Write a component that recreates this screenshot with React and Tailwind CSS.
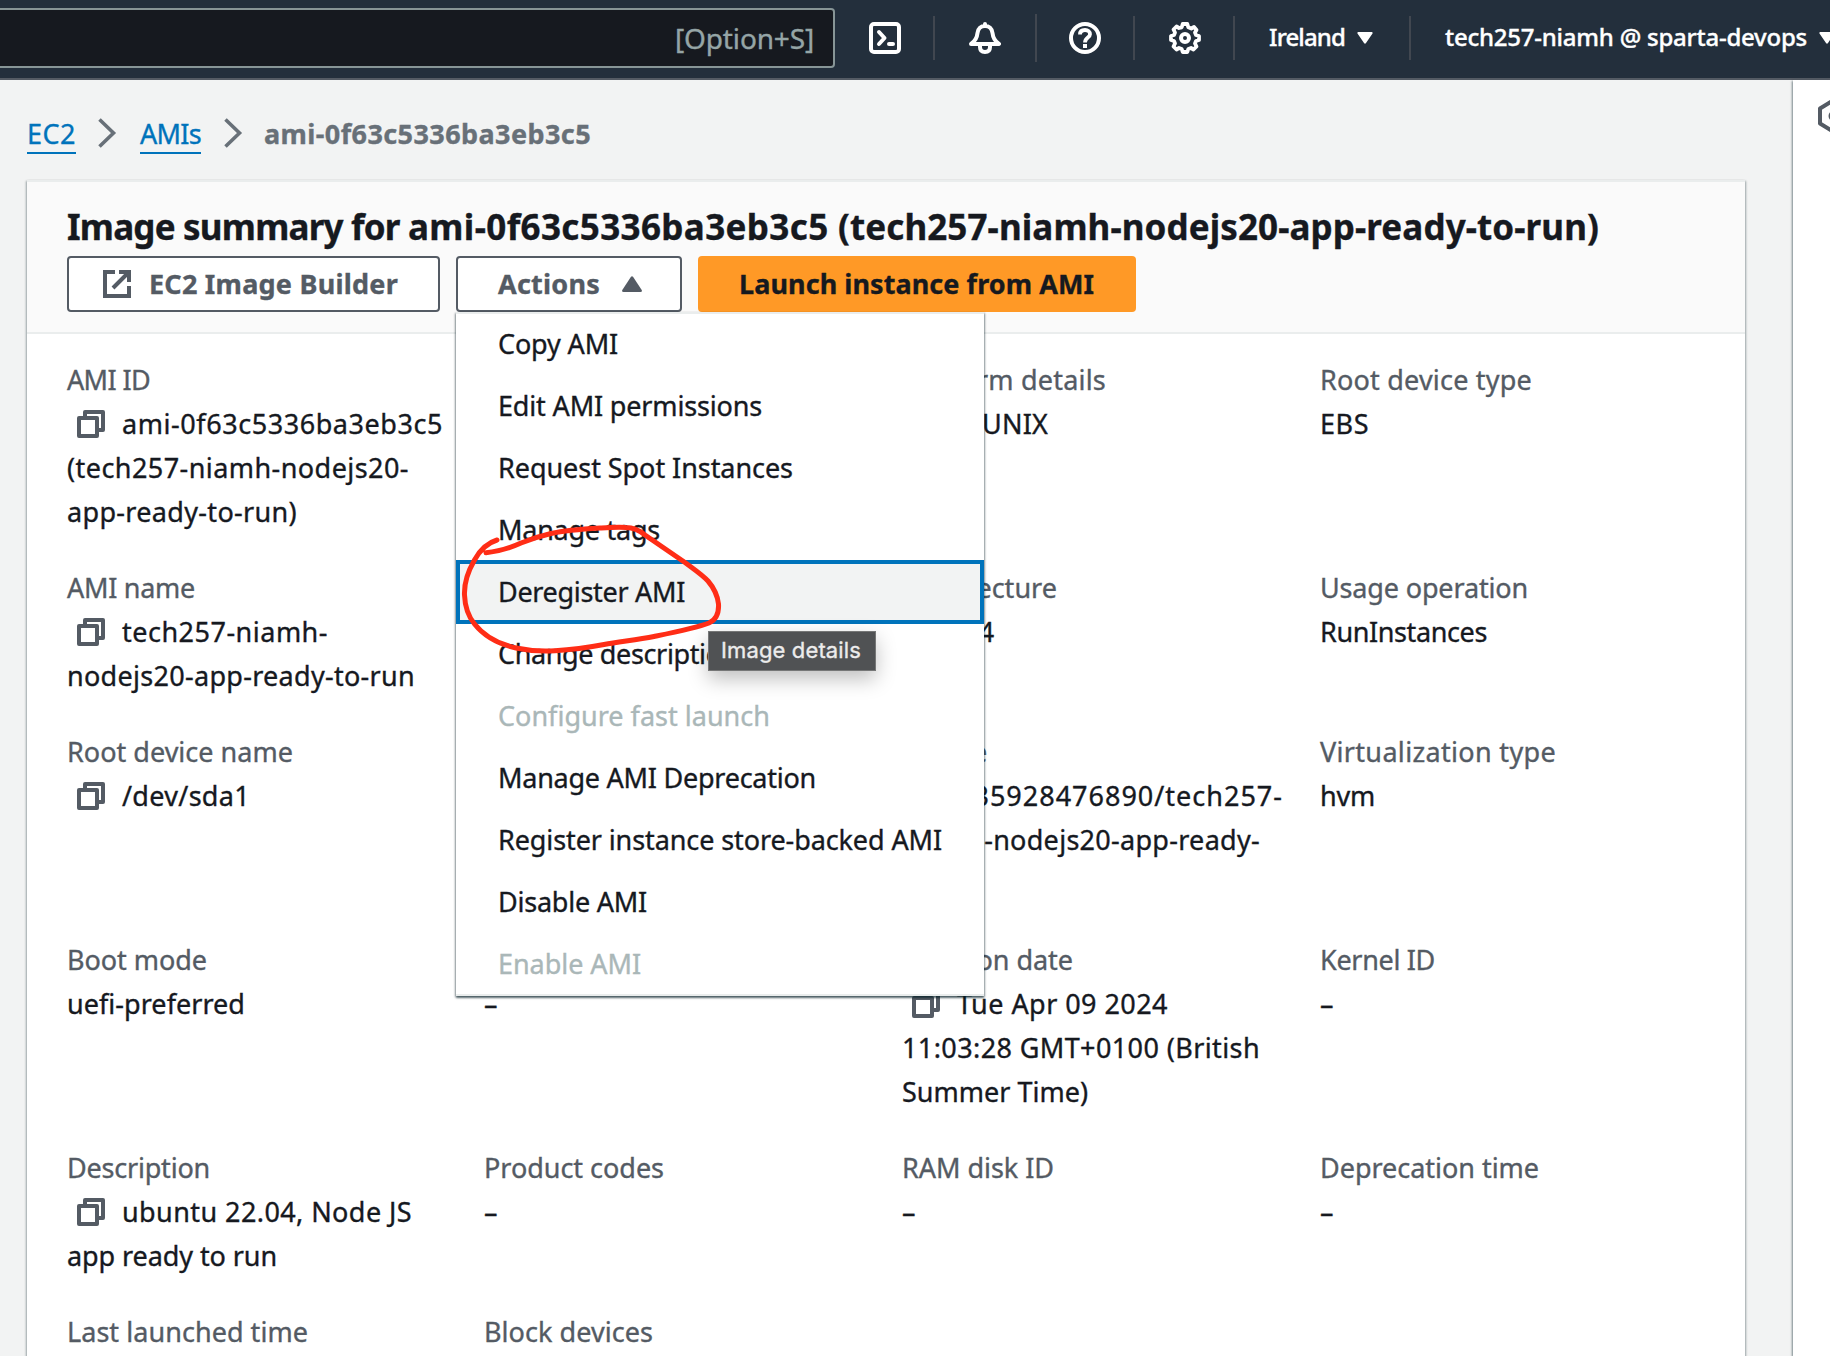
import React, { useLayoutEffect, useRef, useState } from "react";

// Text line whose letter spacing is tuned so that it spans `w` pixels.
function Fit({ w, children, className = "" }) {
  const ref = useRef(null);
  const [ls, setLs] = useState(0);
  useLayoutEffect(() => {
    const n = String(children).length;
    const natural = ref.current.getBoundingClientRect().width;
    if (w) setLs((w - natural) / n);
  }, []);
  return (
    <span ref={ref} className={"inline-block whitespace-pre " + className} style={{ letterSpacing: ls + "px" }}>
      {children}
    </span>
  );
}

function CopyIcon() {
  return (
    <svg className="ml-[10px] mr-[17px] inline-block h-7 w-7 shrink-0" viewBox="0 0 28 28" fill="none" stroke="#545b64" strokeWidth="4" strokeLinejoin="round">
      <path d="M2 8H20V26H2Z" />
      <path d="M8 6V2H26V20H22" />
    </svg>
  );
}

function Field({ label, lw, lines, copy }) {
  return (
    <div className="flex flex-col items-start">
      <div className="h-11 text-[#545b64]">{label && <Fit w={lw}>{label}</Fit>}</div>
      {lines.map(([t, w], i) => (
        <div key={i} className="flex h-11 items-center text-[#16191f]">
          {copy && i === 0 && <CopyIcon />}
          {t && <Fit w={w}>{t}</Fit>}
        </div>
      ))}
    </div>
  );
}

const rows = [
  ["h-[176px]", [
    { label: "AMI ID", lw: 83, copy: true, lines: [["ami-0f63c5336ba3eb3c5", 321], ["(tech257-niamh-nodejs20-", 342], ["app-ready-to-run)", 230]] },
    { label: "", lines: [] },
    { label: "Platform details", lw: 204, lines: [["Linux/UNIX", 146]] },
    { label: "Root device type", lw: 212, lines: [["EBS", 49]] },
  ]],
  ["h-[132px]", [
    { label: "AMI name", lw: 128, copy: true, lines: [["tech257-niamh-", 206], ["nodejs20-app-ready-to-run", 348]] },
    { label: "", lines: [] },
    { label: "Architecture", lw: 155, lines: [["x86_64", 93]] },
    { label: "Usage operation", lw: 208, lines: [["RunInstances", 167]] },
  ]],
  ["h-[176px]", [
    { label: "Root device name", lw: 226, copy: true, lines: [["/dev/sda1", 128]] },
    { label: "", lines: [] },
    { label: "Source", lw: 85, copy: true, lines: [["135928476890/tech257-", 326], ["niamh-nodejs20-app-ready-", 358]] },
    { label: "Virtualization type", lw: 236, lines: [["hvm", 55]] },
  ]],
  ["h-[176px]", [
    { label: "Boot mode", lw: 140, lines: [["uefi-preferred", 178]] },
    { label: "", lines: [["–", 15]] },
    { label: "Creation date", lw: 171, copy: true, lines: [["Tue Apr 09 2024", 211], ["11:03:28 GMT+0100 (British", 358], ["Summer Time)", 186]] },
    { label: "Kernel ID", lw: 115, lines: [["–", 15]] },
  ]],
  ["h-[132px]", [
    { label: "Description", lw: 143, copy: true, lines: [["ubuntu 22.04, Node JS", 290], ["app ready to run", 210]] },
    { label: "Product codes", lw: 180, lines: [["–", 15]] },
    { label: "RAM disk ID", lw: 152, lines: [["–", 15]] },
    { label: "Deprecation time", lw: 219, lines: [["–", 15]] },
  ]],
  ["h-[132px]", [
    { label: "Last launched time", lw: 241, lines: [] },
    { label: "Block devices", lw: 169, lines: [] },
  ]],
];

const menu = [
  ["Copy AMI", 120],
  ["Edit AMI permissions", 264],
  ["Request Spot Instances", 295],
  ["Manage tags", 162],
  ["Deregister AMI", 187],
  ["Change description", 240],
  ["Configure fast launch", 272, true],
  ["Manage AMI Deprecation", 318],
  ["Register instance store-backed AMI", 444],
  ["Disable AMI", 149],
  ["Enable AMI", 143, true],
];

function Chevron() {
  return (
    <svg className="h-[30px] w-[19px]" viewBox="0 0 19 30" fill="none" stroke="#687078" strokeWidth="3.6">
      <path d="M1.5 1.5L15.5 15L1.5 28.5" />
    </svg>
  );
}

function Header() {
  const ic = "h-8 w-8 shrink-0";
  const sep = "h-11 w-[2px] shrink-0 bg-[#414750]";
  return (
    <header className="flex h-20 items-center overflow-hidden border-b-2 border-[#545b64] bg-[#232f3c] pb-[2px] text-[24px] font-medium text-white">
      <div className="flex h-[60px] w-[835px] shrink-0 items-center justify-end rounded-r border-2 border-l-0 border-[#879596] bg-[#16191f] pr-[19px] text-[28px] font-normal text-[#95a5a6]">
        <Fit w={139}>[Option+S]</Fit>
      </div>
      <svg className={ic + " ml-[34px]"} viewBox="0 0 32 32" fill="none" stroke="white" strokeWidth="4" strokeLinecap="round" strokeLinejoin="round">
        <rect x="2" y="2" width="28" height="28" rx="3" />
        <path d="M10 10L15.500 16L10 22M20 22H24" />
      </svg>
      <div className={sep + " ml-8"} />
      <svg className={ic + " ml-[34px]"} viewBox="0 0 32 32" fill="none" stroke="white" strokeWidth="4" strokeLinejoin="round" strokeLinecap="round">
        <path d="M16 2V4M2 22C6.500 19 8 16 8.500 11C9 6.500 12 4 16 4C20 4 23 6.500 23.500 11C24 16 25.500 19 30 22Z" />
        <path d="M11 23V25C11 28.300 13 30 16 30C19 30 21 28.300 21 25V23" />
      </svg>
      <div className="ml-[34px] h-12 w-[2px] shrink-0 bg-[#414750]" />
      <svg className={ic + " ml-8"} viewBox="0 0 32 32" fill="none" stroke="white" strokeWidth="4">
        <circle cx="16" cy="16" r="14" />
        <path d="M11 12.500C11 9.500 13 8 16 8C19 8 21 9.700 21 12.300C21 15.800 16 15.500 16 20.500" strokeWidth="3.800" />
        <path d="M16 22V26" />
      </svg>
      <div className={sep + " ml-8"} />
      <svg className={ic + " ml-[34px]"} viewBox="0 0 32 32" fill="none" stroke="white" strokeWidth="4" strokeLinejoin="round">
        <path d="M13.700 2H18.300L19.300 5.300L22.300 6.500L25 5L27.500 8L26 10.500L27 13L30 14V18L27 19L26 21.500L27.500 24.500L24.500 27.500L22 26L19.300 27L18.300 30H13.700L12.700 27L10 26L7.500 27.500L4.500 24.500L6 21.500L5 19L2 18V14L5 13L6 10.500L4.500 7.500L7.500 4.500L10 6L12.700 5.300Z" strokeWidth="3.800" />
        <circle cx="16" cy="16" r="4" />
      </svg>
      <div className={sep + " ml-8"} />
      <span className="ml-[34px] flex pb-[2px]"><Fit w={76}>Ireland</Fit></span>
      <svg className="ml-3 h-3 w-4 shrink-0" viewBox="0 0 16 12" fill="white"><path d="M1 0H15Q16 .5 15.500 1.500L9 11Q8 12.500 7 11L.5 1.500Q0 .5 1 0Z" /></svg>
      <div className={sep + " ml-9"} />
      <span className="ml-[34px] flex shrink-0 pb-[2px]"><Fit w={362}>tech257-niamh @ sparta-devops</Fit></span>
      <svg className="ml-3 h-3 w-4 shrink-0" viewBox="0 0 16 12" fill="white"><path d="M1 0H15Q16 .5 15.500 1.500L9 11Q8 12.500 7 11L.5 1.500Q0 .5 1 0Z" /></svg>
    </header>
  );
}

function ActionsMenu() {
  return (
    <div className="absolute left-0 top-14 z-10 w-[528px] border-t-2 border-[#eaeded] bg-white font-normal shadow-[0_2px_2px_0_rgba(0,28,36,0.5),1px_1px_2px_0_rgba(0,28,36,0.3),-1px_1px_2px_0_rgba(0,28,36,0.3)]">
      {menu.map(([t, w, off], i) =>
        i === 4 ? (
          <div key={t} className="-mt-[2px] flex h-16 items-center border-4 border-[#0073bb] bg-[#f2f3f3] pl-[38px] text-[#16191f]">
            <Fit w={w}>{t}</Fit>
          </div>
        ) : (
          <div key={t} className={"flex h-[62px] items-center pl-[42px] " + (i === menu.length - 1 ? "border-b-2 border-[#eaeded] " : "pb-[2px] ") + (off ? "text-[#aab7b8]" : "text-[#16191f]")}>
            <Fit w={w}>{t}</Fit>
          </div>
        )
      )}
      <div className="absolute left-[252px] top-[317px] flex h-10 w-[168px] items-center border border-[#767777] bg-[#505254] pb-[2px] pl-[12px] font-['Inter'] text-[22px] font-normal text-[#ececec] shadow-[0_8px_20px_rgba(0,0,0,0.25)]">
        <Fit w={140}>Image details</Fit>
      </div>
      <svg className="absolute left-0 top-[196px] h-[160px] w-[280px]" viewBox="456 510 280 160" fill="none" stroke="#ff2d16" strokeWidth="5" strokeLinecap="round">
        <path d="M497 540C487 543 480 550 474.500 560C467 573 464 583 464.500 595C465 608 468 616 474.500 624C484 636 498 644 516 648C530 651 542 651.500 555 650.700C575 649.500 588 647.500 604 644.500C620 641.500 637 640 654 636.500C676 632 696 628 709 623C717 619.500 719 613 718.500 604C717.500 595 714 588 708 581C702 574.500 695 570 685 562.500L645 535C639 530 634 527.500 626 527.500C617 527 609 527.500 600 528C583 529 567 530 551 533.500C540 536 531 539 521 543C510 548 500 551.500 486 552.700" />
      </svg>
    </div>
  );
}

export default function App() {
  return (
    <div className="flex h-[1356px] w-[1830px] flex-col overflow-hidden bg-[#f2f3f3] font-['Noto_Sans','Open_Sans',sans-serif] text-[27px] leading-[44px] text-[#16191f] [-webkit-text-stroke:0.35px]">
      <Header />
      <div className="flex min-h-0 flex-1">
        <main className="w-[1793px] shrink-0 px-[27px]">
          <nav className="flex h-[100px] items-center pb-[12px] pt-[18px]">
            <span className="mt-1 flex h-[37px] items-center border-b-2 border-[#0073bb] text-[#0073bb]"><Fit w={49}>EC2</Fit></span>
            <span className="ml-[22px]"><Chevron /></span>
            <span className="ml-[23px] mt-1 flex h-[37px] items-center border-b-2 border-[#0073bb] text-[#0073bb]"><Fit w={61}>AMIs</Fit></span>
            <span className="ml-[23px]"><Chevron /></span>
            <span className="ml-[21px] mt-[2px] flex font-bold text-[#687078]"><Fit w={327}>ami-0f63c5336ba3eb3c5</Fit></span>
          </nav>
          <section className="h-[1300px] w-[1718px] border-t-2 border-[#eaeded] bg-white shadow-[1px_1px_2px_0_rgba(0,28,36,0.35),-1px_1px_2px_0_rgba(0,28,36,0.35)]">
            <div className="h-[152px] border-b-2 border-[#eaeded] bg-[#fafafa] pl-10">
              <h1 className="flex h-[74px] items-end pb-[7px] text-[35px] font-bold">
                <Fit w={341}>{"Image summary for "}</Fit>
                <Fit w={430}>{"ami-0f63c5336ba3eb3c5 "}</Fit>
                <Fit w={761}>(tech257-niamh-nodejs20-app-ready-to-run)</Fit>
              </h1>
              <div className="flex h-14 font-bold text-[#545b64]">
                <div className="flex w-[373px] items-center rounded border-2 border-[#545b64] bg-white pl-[34px]">
                  <svg className="mr-[18px] h-7 w-7" viewBox="0 0 28 28" fill="none" stroke="#545b64" strokeWidth="4">
                    <path d="M12 2H2V26H26V16M16 2H26V12M26 2L10 18" />
                  </svg>
                  <Fit w={249}>EC2 Image Builder</Fit>
                </div>
                <div className="relative ml-4 w-[226px]">
                  <div className="flex h-14 items-center rounded border-2 border-[#545b64] bg-white pl-10">
                    <Fit w={102}>Actions</Fit>
                    <svg className="ml-[22px] h-4 w-5" viewBox="0 0 20 16" fill="#545b64"><path d="M9 .8Q10-.5 11 .8L19.700 14Q20.500 16 18.500 16H1.500Q-.5 16 .3 14Z" /></svg>
                  </div>
                  <ActionsMenu />
                </div>
                <div className="ml-4 flex w-[438px] items-center rounded bg-[#ff9926] pl-[41px] text-[#16191f]">
                  <Fit w={355}>Launch instance from AMI</Fit>
                </div>
              </div>
            </div>
            <div className="flex flex-col gap-8 pl-10 pt-6">
              {rows.map(([h, cells], i) => (
                <div key={i} className={"grid grid-cols-[417px_418px_418px_1fr] " + h}>
                  {cells.map((c, j) => <Field key={j} {...c} />)}
                </div>
              ))}
            </div>
          </section>
        </main>
        <aside className="relative flex-1 overflow-hidden bg-white pl-[25px] pt-[18px] shadow-[-1px_1px_2px_0_rgba(0,28,36,0.5)]">
          <svg className="h-9 w-8 max-w-none" viewBox="0 0 32 36" fill="none" stroke="#545b64" strokeWidth="4">
            <path d="M2 10.500L16 2L30 10.500V25.500L16 34L2 25.500Z" strokeLinejoin="round" />
            <circle cx="16" cy="18" r="3.500" />
          </svg>
        </aside>
      </div>
    </div>
  );
}
